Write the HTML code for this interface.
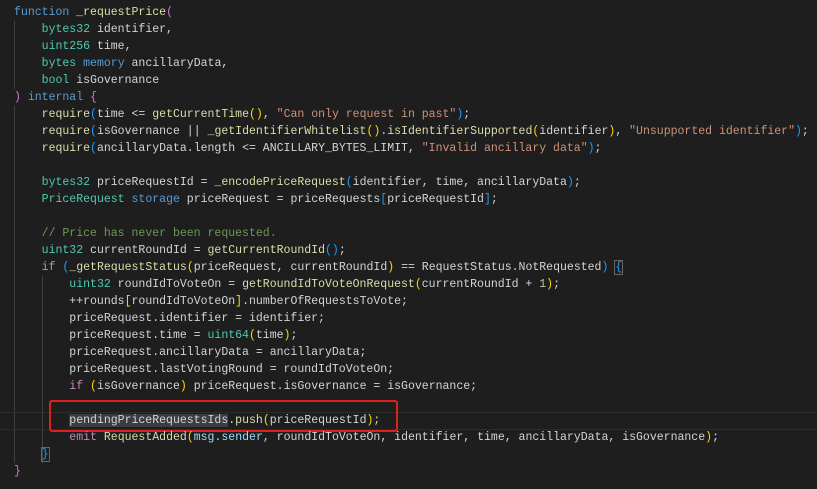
<!DOCTYPE html>
<html><head><style>
html,body{margin:0;padding:0;background:#1e1e1e;width:817px;height:489px;overflow:hidden}
.c{position:absolute;left:14px;top:4px;font-family:"Liberation Mono",monospace;font-size:11.53px;line-height:17px;color:#d4d4d4;white-space:pre}
.k{color:#569cd6}.t{color:#4ec9b0}.f{color:#dcdcaa}.s{color:#ce9178}.m{color:#6a9955}.p{color:#c586c0}
.g{color:#ffd700}.o{color:#da70d6}.b{color:#179fff}.v{color:#9cdcfe}.n{color:#b5cea8}
.guide{position:absolute;width:1px;background:#404040}
.sel{background:#3a3d41}
</style></head><body>
<div class="guide" style="left:14px;top:21px;height:68px"></div>
<div class="guide" style="left:14px;top:106px;height:357px"></div>
<div class="guide" style="left:42px;top:276px;height:187px"></div>
<div style="position:absolute;left:0;top:412px;width:817px;height:18px;border-top:1px solid #2c2c2c;border-bottom:1px solid #2c2c2c;box-sizing:border-box"></div>
<div style="position:absolute;left:49px;top:400px;width:349px;height:32px;border:2px solid #e0201c;border-radius:3px;box-sizing:border-box"></div>
<div class="c"><span class="k">function</span> <span class="f">_requestPrice</span><span class="o">(</span>
    <span class="t">bytes32</span> identifier,
    <span class="t">uint256</span> time,
    <span class="t">bytes</span> <span class="k">memory</span> ancillaryData,
    <span class="t">bool</span> isGovernance
<span class="o">)</span> <span class="k">internal</span> <span class="o">{</span>
    <span class="f">require</span><span class="b">(</span>time &lt;= <span class="f">getCurrentTime</span><span class="g">()</span>, <span class="s">"Can only request in past"</span><span class="b">)</span>;
    <span class="f">require</span><span class="b">(</span>isGovernance || <span class="f">_getIdentifierWhitelist</span><span class="g">()</span>.<span class="f">isIdentifierSupported</span><span class="g">(</span>identifier<span class="g">)</span>, <span class="s">"Unsupported identifier"</span><span class="b">)</span>;
    <span class="f">require</span><span class="b">(</span>ancillaryData.length &lt;= ANCILLARY_BYTES_LIMIT, <span class="s">"Invalid ancillary data"</span><span class="b">)</span>;

    <span class="t">bytes32</span> priceRequestId = <span class="f">_encodePriceRequest</span><span class="b">(</span>identifier, time, ancillaryData<span class="b">)</span>;
    <span class="t">PriceRequest</span> <span class="k">storage</span> priceRequest = priceRequests<span class="b">[</span>priceRequestId<span class="b">]</span>;

    <span class="m">// Price has never been requested.</span>
    <span class="t">uint32</span> currentRoundId = <span class="f">getCurrentRoundId</span><span class="b">()</span>;
    <span class="p">if</span> <span class="b">(</span><span class="f">_getRequestStatus</span><span class="g">(</span>priceRequest, currentRoundId<span class="g">)</span> == RequestStatus.NotRequested<span class="b">)</span> <span class="b" style="outline:1px solid #666">{</span>
        <span class="t">uint32</span> roundIdToVoteOn = <span class="f">getRoundIdToVoteOnRequest</span><span class="g">(</span>currentRoundId + <span class="n">1</span><span class="g">)</span>;
        ++rounds<span class="g">[</span>roundIdToVoteOn<span class="g">]</span>.numberOfRequestsToVote;
        priceRequest.identifier = identifier;
        priceRequest.time = <span class="t">uint64</span><span class="g">(</span>time<span class="g">)</span>;
        priceRequest.ancillaryData = ancillaryData;
        priceRequest.lastVotingRound = roundIdToVoteOn;
        <span class="p">if</span> <span class="g">(</span>isGovernance<span class="g">)</span> priceRequest.isGovernance = isGovernance;

        <span class="sel">pendingPriceRequestsIds</span>.<span class="f">push</span><span class="g">(</span>priceRequestId<span class="g">)</span>;
        <span class="p">emit</span> <span class="f">RequestAdded</span><span class="g">(</span><span class="v">msg</span>.<span class="v">sender</span>, roundIdToVoteOn, identifier, time, ancillaryData, isGovernance<span class="g">)</span>;
    <span class="b" style="outline:1px solid #666">}</span>
<span class="o">}</span></div>
</body></html>
